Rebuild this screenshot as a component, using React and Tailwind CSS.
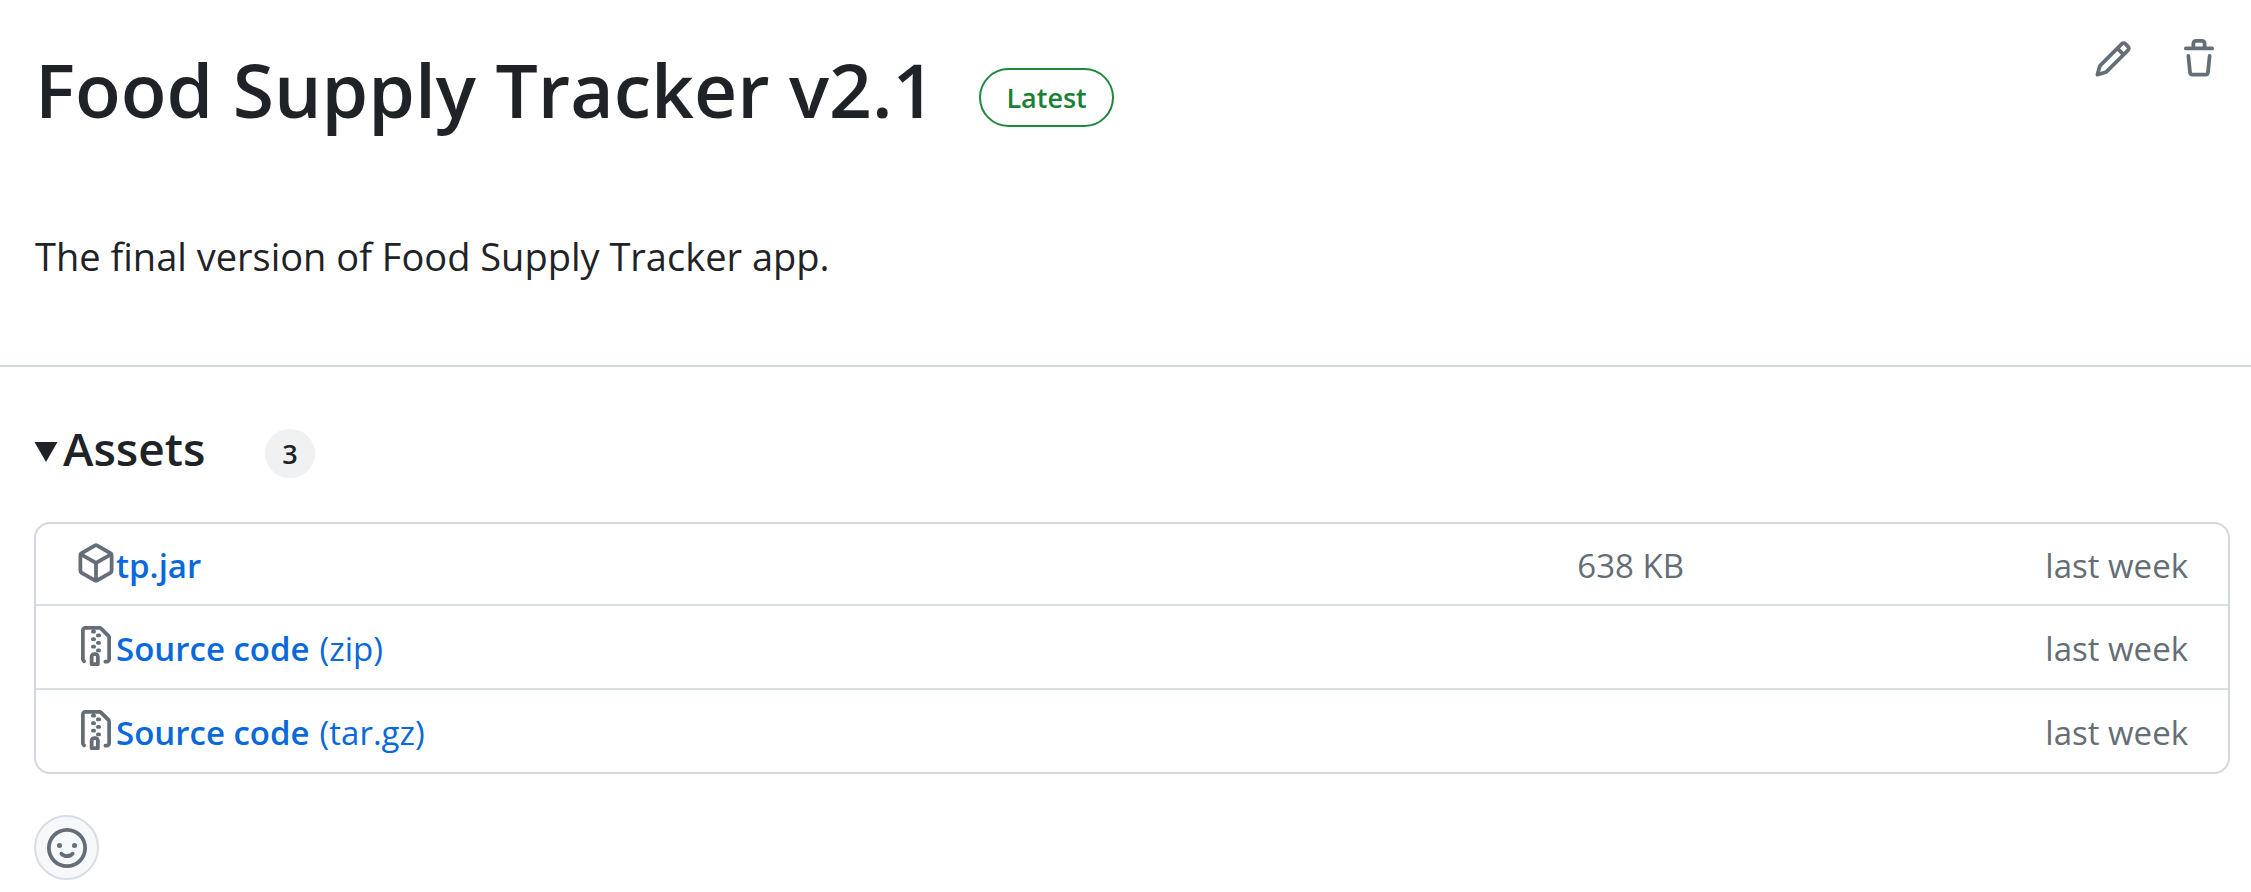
const ICONS = {
  pencil:
    "M11.013 1.427a1.75 1.75 0 0 1 2.474 0l1.086 1.086a1.75 1.75 0 0 1 0 2.474l-8.61 8.61c-.21.21-.47.364-.756.445l-3.251.93a.75.75 0 0 1-.927-.928l.929-3.25c.081-.286.235-.547.445-.758l8.61-8.61Zm.176 4.823L9.75 4.81l-6.286 6.287a.253.253 0 0 0-.064.108l-.558 1.953 1.953-.558a.253.253 0 0 0 .108-.064Zm1.238-3.763a.25.25 0 0 0-.354 0L10.811 3.75l1.439 1.44 1.263-1.263a.25.25 0 0 0 0-.354Z",
  trash:
    "M11 1.75V3h2.25a.75.75 0 0 1 0 1.5H2.75a.75.75 0 0 1 0-1.5H5V1.75C5 .784 5.784 0 6.75 0h2.5C10.216 0 11 .784 11 1.75ZM4.496 6.675l.66 6.6a.25.25 0 0 0 .249.225h5.19a.25.25 0 0 0 .249-.225l.66-6.6a.75.75 0 0 1 1.492.149l-.66 6.6A1.748 1.748 0 0 1 10.595 15h-5.19a1.75 1.75 0 0 1-1.741-1.575l-.66-6.6a.75.75 0 1 1 1.492-.15ZM6.5 1.75V3h3V1.75a.25.25 0 0 0-.25-.25h-2.5a.25.25 0 0 0-.25.25Z",
  package:
    "m8.878.392 5.25 3.045c.54.314.872.89.872 1.514v6.098a1.75 1.75 0 0 1-.872 1.514l-5.25 3.045a1.75 1.75 0 0 1-1.756 0l-5.25-3.045A1.75 1.75 0 0 1 1 11.049V4.951c0-.624.332-1.201.872-1.514L7.122.392a1.75 1.75 0 0 1 1.756 0ZM7.875 1.69l-4.63 2.685L8 7.133l4.755-2.758-4.63-2.685a.248.248 0 0 0-.25 0ZM2.5 5.677v5.372c0 .09.047.171.125.216l4.625 2.683V8.432Zm6.25 8.271 4.625-2.683a.25.25 0 0 0 .125-.216V5.677L8.75 8.432Z",
  zip:
    "M3.5 1.75v11.5c0 .09.048.173.126.217a.75.75 0 0 1-.752 1.298A1.748 1.748 0 0 1 2 13.25V1.75C2 .784 2.784 0 3.75 0h5.586c.464 0 .909.185 1.237.513l2.914 2.914c.329.328.513.773.513 1.237v8.586A1.75 1.75 0 0 1 12.25 15h-.5a.75.75 0 0 1 0-1.5h.5a.25.25 0 0 0 .25-.25V4.664a.25.25 0 0 0-.073-.177L9.513 1.573a.25.25 0 0 0-.177-.073H7.25a.75.75 0 0 1 0 1.5h-.5a.75.75 0 0 1 0-1.5h-3a.25.25 0 0 0-.25.25Zm3.75 8.75h.5c.966 0 1.75.784 1.75 1.75v3a.75.75 0 0 1-.75.75h-2.5a.75.75 0 0 1-.75-.75v-3c0-.966.784-1.75 1.75-1.75ZM6 5.25a.75.75 0 0 1 .75-.75h.5a.75.75 0 0 1 0 1.5h-.5A.75.75 0 0 1 6 5.25Zm.75 2.25h.5a.75.75 0 0 1 0 1.5h-.5a.75.75 0 0 1 0-1.5Zm1.25-.75A.75.75 0 0 1 8.75 6h.5a.75.75 0 0 1 0 1.5h-.5A.75.75 0 0 1 8 6.75ZM8.75 3h.5a.75.75 0 0 1 0 1.5h-.5a.75.75 0 0 1 0-1.5ZM8 9.75A.75.75 0 0 1 8.75 9h.5a.75.75 0 0 1 0 1.5h-.5A.75.75 0 0 1 8 9.75Zm-1 2.5v2.25h1v-2.25a.25.25 0 0 0-.25-.25h-.5a.25.25 0 0 0-.25.25Z",
  smiley:
    "M8 0a8 8 0 1 1 0 16A8 8 0 0 1 8 0ZM1.5 8a6.5 6.5 0 1 0 13 0 6.5 6.5 0 0 0-13 0Zm3.82 1.636a.75.75 0 0 1 1.038.175l.007.009c.103.118.22.222.35.31.264.178.683.37 1.285.37.602 0 1.02-.192 1.285-.371.13-.088.247-.192.35-.31l.007-.008a.75.75 0 0 1 1.222.87l-.022-.015c.02.013.021.015.021.015v.001l-.001.002-.002.003-.005.007-.014.019a2.066 2.066 0 0 1-.184.213c-.16.166-.338.316-.53.445-.63.418-1.37.638-2.127.629-.946 0-1.652-.308-2.126-.63a3.331 3.331 0 0 1-.715-.657l-.014-.02-.005-.006-.002-.003v-.002h-.001l.613-.432-.614.43a.75.75 0 0 1 .183-1.044ZM12 7a1 1 0 1 1-2 0 1 1 0 0 1 2 0ZM5 8a1 1 0 1 1 0-2 1 1 0 0 1 0 2Zm5.25 2.25.592.416a97.71 97.71 0 0 0-.592-.416Z",
};

function Icon({ name }) {
  return (
    <svg viewBox="0 0 16 16" className="size-10 shrink-0 fill-[#656d76]" aria-hidden="true">
      <path d={ICONS[name]} />
    </svg>
  );
}

const ASSETS = [
  { icon: "package", name: "tp.jar", size: "638 KB", date: "last week" },
  { icon: "zip", name: "Source code", format: "(zip)", size: "", date: "last week" },
  { icon: "zip", name: "Source code", format: "(tar.gz)", size: "", date: "last week" },
];

function AssetRow({ asset }) {
  return (
    <tr className="group h-21 text-[33px] leading-[52px] first:h-20">
      <td className="border-t-2 border-[#d8dee4] p-0 pl-10 group-first:border-t-0">
        <a href="#" className="flex text-[#0969da]">
          <span className="pt-[7px]">
            <Icon name={asset.icon} />
          </span>
          <span className="pt-1 font-semibold">{asset.name}</span>
          {asset.format && <span className="pt-1 pl-2.5">{asset.format}</span>}
        </a>
      </td>
      <td className="w-50 border-t-2 border-[#d8dee4] p-0 pt-1 text-right text-[#656d76] group-first:border-t-0">
        {asset.size}
      </td>
      <td className="w-136 border-t-2 border-[#d8dee4] p-0 pt-1 pr-10 text-right text-[#656d76] group-first:border-t-0">
        {asset.date}
      </td>
    </tr>
  );
}

export default function App() {
  return (
    <main className="bg-white font-['Open_Sans','Noto_Sans',sans-serif] text-[#1f2328]">
      <section className="border-b-2 border-[#d0d7de] pr-8 pb-[79px] pl-[35px]">
        <header className="flex items-start justify-between pt-[29px]">
          <div className="flex items-center gap-11">
            <h1 className="text-[75px] leading-[120px] font-semibold">Food Supply Tracker v2.1</h1>
            <span className="mt-4 rounded-full border-2 border-[#1f883d] px-[25px] text-[27px] leading-[55px] font-semibold text-[#1a7f37]">
              Latest
            </span>
          </div>
          <div className="flex gap-[46px] pt-2.5">
            <button type="button" aria-label="Edit release">
              <Icon name="pencil" />
            </button>
            <button type="button" aria-label="Delete release">
              <Icon name="trash" />
            </button>
          </div>
        </header>
        <p className="pt-[77px] text-[38px] leading-[60px]">The final version of Food Supply Tracker app.</p>
      </section>

      <section className="pt-[50px] pr-[21px] pl-[34px]">
        <details open>
          <summary className="flex cursor-pointer list-none items-center">
            <svg viewBox="0 0 24 20" className="mt-2 mr-[5px] h-5 w-6 fill-[#1f2328]" aria-hidden="true">
              <path d="M0.5 0h23L12 20Z" />
            </svg>
            <h2 className="text-[46px] leading-[62px] font-semibold">Assets</h2>
            <span className="mt-2.5 ml-15 rounded-full bg-[#eff1f3] px-[17px] text-[27px] leading-[49px] font-semibold">
              3
            </span>
          </summary>
          <div className="mt-[43px] rounded-2xl border-2 border-[#d0d7de]">
            <table className="w-full border-separate border-spacing-0" aria-label="Release assets">
              <tbody>
                {ASSETS.map((asset, i) => (
                  <AssetRow key={i} asset={asset} />
                ))}
              </tbody>
            </table>
          </div>
        </details>
        <button
          type="button"
          aria-label="Add a reaction"
          className="mt-[41px] flex size-[65px] items-center justify-center rounded-full border-2 border-[#d8dee4] bg-[#f6f8fa]"
        >
          <Icon name="smiley" />
        </button>
      </section>
    </main>
  );
}
